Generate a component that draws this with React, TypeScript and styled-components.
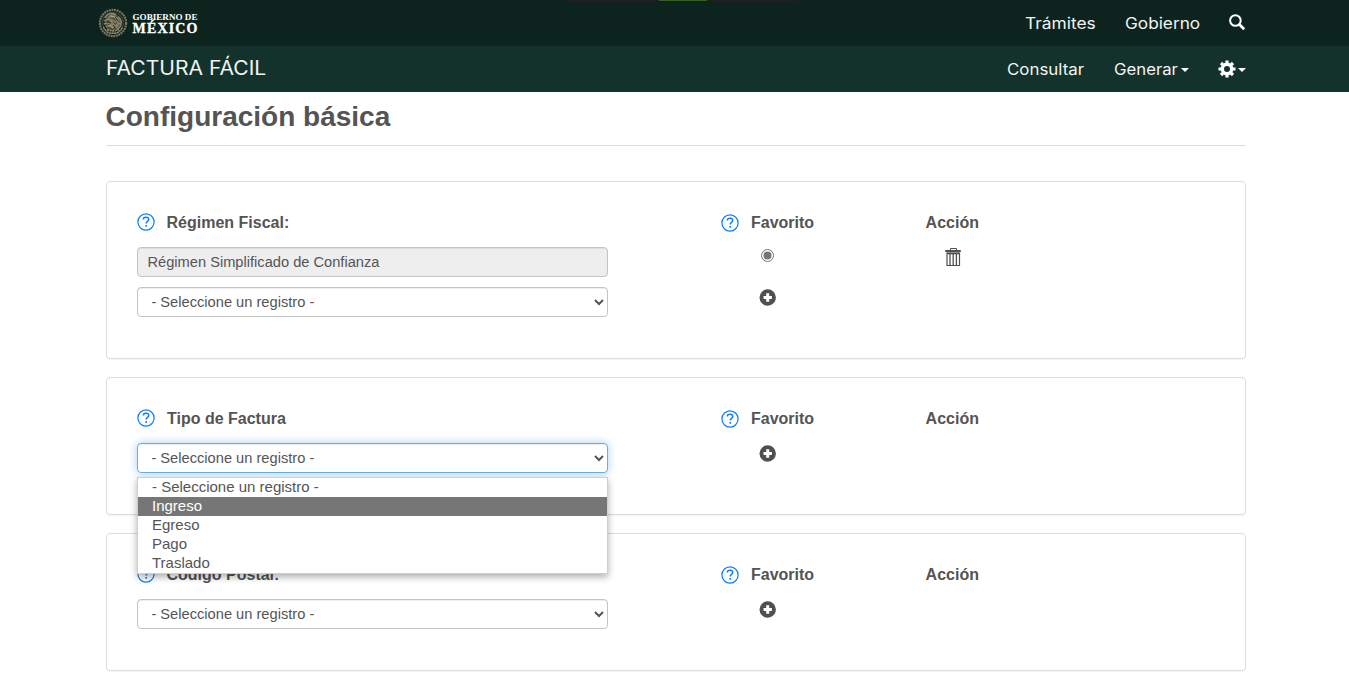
import React from "react";
import styled, { createGlobalStyle } from "styled-components";

const GlobalStyle = createGlobalStyle`
  *, *::before, *::after { box-sizing: border-box; }
  html, body { margin: 0; padding: 0; background: #fff; overflow: hidden; }
  body { font-family: "Liberation Sans", Arial, sans-serif; font-size: 16px; color: #545454; }
`;

const Page = styled.div`
  display: flex;
  flex-direction: column;
  height: 685px;
  overflow: hidden;
`;

const Bar = styled.header<{ $tone: string }>`
  position: relative;
  display: flex;
  align-items: center;
  justify-content: space-between;
  flex: none;
  height: 46px;
  padding: 0 103px 0 106px;
  background: ${(p) => p.$tone};
`;

const LoadStrip = styled.div`
  position: absolute;
  top: 0;
  left: 568px;
  width: 230px;
  height: 1px;
  background: linear-gradient(90deg, #231f20 91px, #355e22 91px, #355e22 139px, #231f20 139px);
`;

const Logo = styled.a`
  display: flex;
  align-items: center;
  gap: 4px;
  margin-left: -8px;
  color: #fff;
`;

const LogoText = styled.svg`
  display: block;
  overflow: visible;
  font-family: "Liberation Serif", serif;
  font-weight: 700;
  fill: #fff;
`;

const Stretch = styled.span<{ $scale: number }>`
  display: inline-block;
  transform: scaleX(${(p) => p.$scale});
  transform-origin: 0 50%;
`;

const Brand = styled.span`
  font-family: Inter, sans-serif;
  font-size: 19.5px;
  line-height: 24px;
  color: #f0f3f2;
  font-weight: 400;
  margin: -3px 0 0 -0.5px;
`;

const Nav = styled.nav`
  display: flex;
  align-items: center;
  gap: 29px;
`;

const NavLink = styled.a<{ $width: number }>`
  display: flex;
  align-items: center;
  justify-content: space-between;
  width: ${(p) => p.$width}px;
  white-space: nowrap;
  font-family: Inter, sans-serif;
  font-size: 15.5px;
  line-height: 20px;
  color: #f2f5f4;

  ${Stretch} {
    padding-top: 2px;
    margin-left: 0.6px;
  }
`;

const Caret = styled.i`
  flex: none;
  margin-top: 1px;
  border-top: 4px solid #fff;
  border-left: 4px solid transparent;
  border-right: 4px solid transparent;
`;

const Main = styled.main`
  display: flex;
  flex-direction: column;
  width: 1140px;
  margin-left: 106px;
`;

const Title = styled.h1`
  margin: 0 0 35px;
  height: 54px;
  padding-top: 9px;
  font-size: 28px;
  line-height: 32px;
  font-weight: 700;
  text-indent: -0.5px;
  border-bottom: 1px solid #ddd;
`;

const Card = styled.section<{ $height: number }>`
  display: flex;
  height: ${(p) => p.$height}px;
  margin-bottom: 18px;
  padding: 30px;
  border: 1px solid #ddd;
  border-radius: 4px;
  box-shadow: 0 1px 1px rgba(0, 0, 0, 0.05);
`;

const FieldColumn = styled.div`
  position: relative;
  display: flex;
  flex-direction: column;
  gap: 10px;
  width: 471px;
`;

const FavoriteColumn = styled.div`
  display: flex;
  flex-direction: column;
  width: 204px;
  margin-left: 113px;
`;

const ActionColumn = styled.div`
  display: flex;
  flex-direction: column;
  width: 56px;
`;

const Heading = styled.div<{ $gap: number }>`
  display: flex;
  align-items: center;
  gap: ${(p) => p.$gap}px;
  height: 22px;
  font-weight: 700;
  line-height: 22px;
  white-space: nowrap;
`;

const FieldHeading = styled(Heading)`
  margin-bottom: 3px;

  svg {
    margin-top: -2px;
  }
`;

const ActionHeading = styled(Heading)`
  padding-left: 0.6px;
`;

const ReadOnlyInput = styled.input`
  width: 100%;
  height: 30px;
  padding: 4px 10px 4px 9.5px;
  border: 1px solid #c4c4c4;
  border-radius: 4px;
  background: #eee;
  color: #555;
  font: 14.65px "Liberation Sans", Arial, sans-serif;
  box-shadow: inset 0 1px 1px rgba(0, 0, 0, 0.075);
  outline: none;
`;

const Select = styled.select<{ $open?: boolean }>`
  width: 100%;
  height: 30px;
  padding: 4px 0 4px 9.4px;
  border: 1px solid ${(p) => (p.$open ? "#66afe9" : "#c4c4c4")};
  border-radius: 4px;
  background: #fff;
  color: #555;
  font: 14.67px "Liberation Sans", Arial, sans-serif;
  box-shadow: inset 0 1px 1px rgba(0, 0, 0, 0.075)${(p) => (p.$open ? ", 0 0 8px rgba(102, 175, 233, 0.6)" : "")};
  outline: none;
`;

const Menu = styled.ul`
  position: absolute;
  z-index: 2;
  top: 69px;
  left: 0;
  width: 471px;
  margin: 0;
  padding: 0;
  list-style: none;
  background: #fff;
  border: 1px solid #cfcfcf;
  box-shadow: 0 3px 7px rgba(0, 0, 0, 0.32);
`;

const MenuItem = styled.li<{ $active: boolean }>`
  height: 19px;
  padding-left: 14px;
  font-size: 15px;
  line-height: 18px;
  background: ${(p) => (p.$active ? "#767676" : "#fff")};
  color: ${(p) => (p.$active ? "#fff" : "#555")};
`;

const RadioMark = styled.span`
  display: flex;
  align-items: center;
  justify-content: center;
  width: 13px;
  height: 13px;
  margin: 15px 0 0 40px;
  border: 1px solid #767676;
  border-radius: 50%;

  &::after {
    content: "";
    width: 7px;
    height: 7px;
    border-radius: 50%;
    background: #767676;
    box-shadow: 0 0 0 0.5px #767676;
  }
`;

const PlusIcon = styled.svg<{ $top: number }>`
  flex: none;
  margin: ${(p) => p.$top}px 0 0 38px;
`;

const TrashIcon = styled.svg`
  margin: 14px 0 0 20px;
`;

const Help = () => (
  <svg width="18" height="18" viewBox="0 0 18 18" fill="none" stroke="#0b7cff">
    <circle cx="9" cy="9" r="8.1" strokeWidth="1.2" />
    <path d="M6.3 6.500C6.300 4.900 7.500 4.300 9 4.300s2.700.8 2.700 2.200c0 2-2.500 1.900-2.500 4.100" strokeWidth="1.5" />
    <path d="M9.200 12v1.800" strokeWidth="1.600" />
  </svg>
);

const Plus = ({ top }: { top: number }) => (
  <PlusIcon $top={top} width="17" height="17" viewBox="0 0 17 17">
    <circle cx="8.700" cy="8.500" r="8.200" fill="#505050" />
    <path d="M7.200 4.300h3V7h2.700v3h-2.700v2.700h-3V10H4.500V7h2.700z" fill="#fff" />
  </PlusIcon>
);

const Trash = () => (
  <TrashIcon width="16" height="18" viewBox="0 0 16 18" fill="none" stroke="#505050">
    <path d="M5.500 2.500v-2h6v2" />
    <path d="M.3 3h15.500" strokeWidth="2" />
    <path d="M2 5h12.500v12.500H2z" strokeWidth="1.200" />
    <path d="M2 5.500h12.500" strokeWidth="1.600" />
    <path d="M5 6v11M8.200 6v11M11.400 6v11" strokeWidth="1.300" />
  </TrashIcon>
);

const Seal = () => (
  <svg width="30" height="30" viewBox="0 0 30 30" fill="none" stroke="#8a8267">
    <circle cx="15" cy="15" r="13.100" stroke="#7d775e" strokeWidth="2.200" strokeDasharray="1.900 .7" />
    <circle cx="15" cy="15" r="10.500" stroke="#3b483a" strokeWidth="1.200" />
    <circle cx="15" cy="14.500" r="8.500" fill="#4d523f" stroke="none" />
    <path d="M7 10c2-5 8-6 11-3-3-1-6 0-7 2 4-1 8 0 10 4M6 13c4-3 9-2 12 2M6 16c4-2 8 0 10 3M8 19c3-2 6-1 8 1M12 13l5 5 5-3M10 10l5 5M20 9c5 3 4 10-1 12M18 12c3 2 3 5 0 8" strokeWidth="1.500" />
    <path d="M5.500 19c2 5 6 7 9.500 6 4 1 8-2 9.500-6M9 21.500c4 2 8 2 12 0" stroke="#9e9475" strokeWidth="1.400" strokeDasharray="2 .7" />
    <path d="M13 8l3 1 3 3M11 17l4 3" stroke="#b1a580" />
    <path d="M9 14l4 1M17 9l3 4M15 17l2 3" stroke="#172d25" />
  </svg>
);

const SearchGlyph = () => (
  <svg width="18" height="18" viewBox="0 0 18 18" fill="none" stroke="#fff">
    <circle cx="7.400" cy="6.500" r="5.300" strokeWidth="2" />
    <path d="M11.200 10.300l5 5" strokeWidth="2.800" />
  </svg>
);

const Gear = () => (
  <svg width="18" height="18" viewBox="0 0 18 18" fill="none" stroke="#fff">
    <circle cx="9" cy="9" r="4.700" strokeWidth="3.400" />
    <path d="M9 .5v3M9 14.500v3M.5 9h3M14.500 9h3M3 3l2.200 2.200M12.800 12.800L15 15M15 3l-2.200 2.200M5.200 12.800L3 15" strokeWidth="3.200" />
  </svg>
);

const PLACEHOLDER = "- Seleccione un registro -";
const OPTIONS = [PLACEHOLDER, "Ingreso", "Egreso", "Pago", "Traslado"];

type SectionProps = {
  label: string;
  height: number;
  labelGap?: number;
  saved?: string;
  open?: boolean;
};

function ConfigSection({ label, height, labelGap = 11.5, saved, open }: SectionProps) {
  return (
    <Card $height={height}>
      <FieldColumn>
        <FieldHeading $gap={labelGap}>
          <Help />
          {label}
        </FieldHeading>
        {saved && <ReadOnlyInput readOnly value={saved} />}
        <Select $open={open}>
          <option>{PLACEHOLDER}</option>
        </Select>
        {open && (
          <Menu>
            {OPTIONS.map((o) => (
              <MenuItem key={o} $active={o === "Ingreso"}>
                {o}
              </MenuItem>
            ))}
          </Menu>
        )}
      </FieldColumn>
      <FavoriteColumn>
        <Heading $gap={12}>
          <Help />
          Favorito
        </Heading>
        {saved && <RadioMark role="radio" aria-checked="true" />}
        <Plus top={saved ? 27 : 15} />
      </FavoriteColumn>
      <ActionColumn>
        <ActionHeading $gap={0}>Acción</ActionHeading>
        {saved && <Trash />}
      </ActionColumn>
    </Card>
  );
}

export default function App() {
  return (
    <Page>
      <GlobalStyle />
      <Bar $tone="#0c231e">
        <LoadStrip />
        <Logo>
          <Seal />
          <LogoText width="68" height="30" viewBox="0 0 68 30">
            <text x="0.5" y="12" fontSize="9" textLength="65" lengthAdjust="spacingAndGlyphs">GOBIERNO DE</text>
            <text x="0.5" y="25" fontSize="14" textLength="65" lengthAdjust="spacing" stroke="#fff" strokeWidth="0.3">MÉXICO</text>
          </LogoText>
        </Logo>
        <Nav>
          <NavLink $width={71}><Stretch $scale={1.12}>Trámites</Stretch></NavLink>
          <NavLink $width={75}><Stretch $scale={1.11}>Gobierno</Stretch></NavLink>
          <SearchGlyph />
        </Nav>
      </Bar>
      <Bar $tone="#13322b">
        <Brand><Stretch $scale={1.08}>FACTURA FÁCIL</Stretch></Brand>
        <Nav>
          <NavLink $width={78}><Stretch $scale={1.09}>Consultar</Stretch></NavLink>
          <NavLink $width={76}>
            <Stretch $scale={1.08}>Generar</Stretch>
            <Caret />
          </NavLink>
          <NavLink as="span" $width={28}>
            <Gear />
            <Caret />
          </NavLink>
        </Nav>
      </Bar>
      <Main>
        <Title>Configuración básica</Title>
        <ConfigSection label="Régimen Fiscal:" height={178} saved="Régimen Simplificado de Confianza" />
        <ConfigSection label="Tipo de Factura" height={138} labelGap={12} open />
        <ConfigSection label="Código Postal:" height={138} />
      </Main>
    </Page>
  );
}
